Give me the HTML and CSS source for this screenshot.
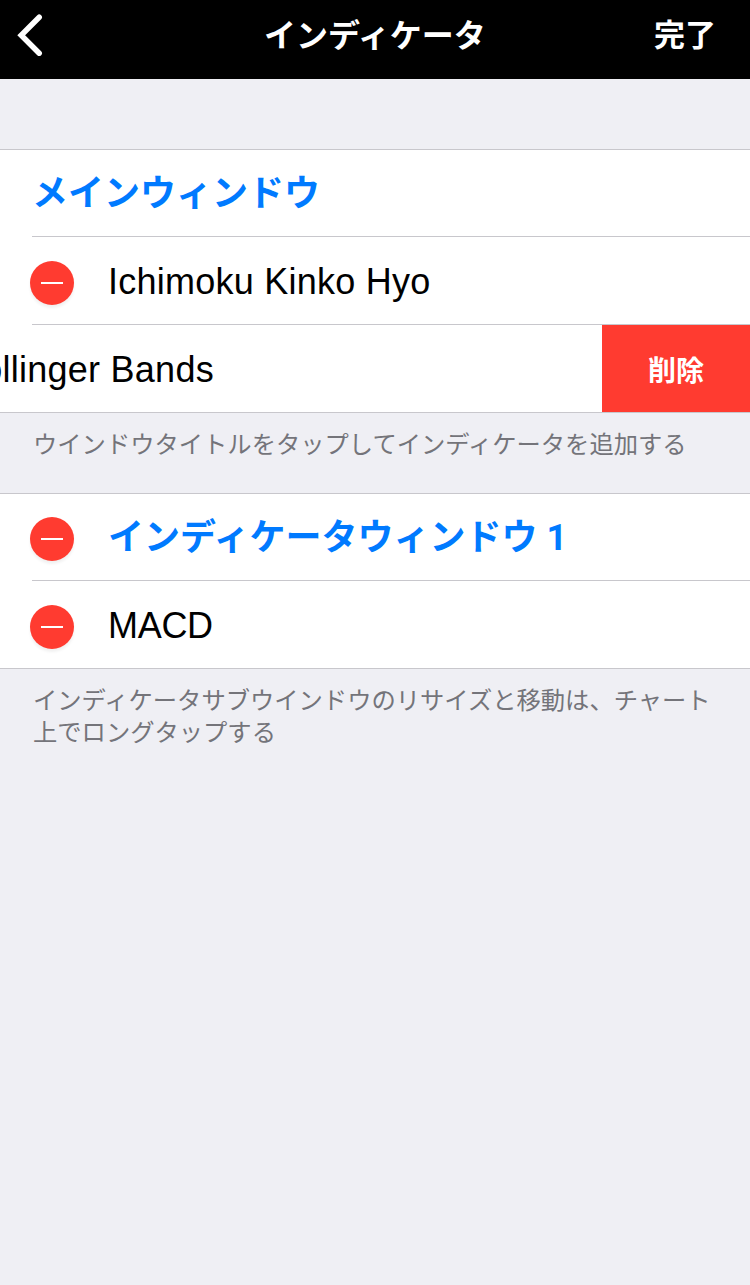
FILE: index.html
```html
<!DOCTYPE html>
<html lang="ja">
<head>
  <meta charset="UTF-8" />
  <meta name="viewport" content="width=device-width, initial-scale=1.0"/>
  <title>インディケータ</title>
  <link rel="stylesheet" href="styles.css">
</head>
<body>

  <!-- Navigation bar -->
  <header class="navbar">
    <button class="back-btn" aria-label="戻る">
      <svg width="28" height="44" viewBox="0 0 28 44">
        <path d="M23.200 4.200 L5.200 22.200 L23.200 40.200" fill="none" stroke="#fff" stroke-width="5.500" stroke-linecap="round" stroke-linejoin="miter"/>
      </svg>
    </button>
    <h1>インディケータ</h1>
    <button class="done-btn">完了</button>
  </header>

  <main>
    <!-- Main window -->
    <section class="group">
      <div class="row"><h2>メインウィンドウ</h2></div>
      <div class="row">
        <button class="remove-btn" aria-label="削除"></button>
        <span class="label">Ichimoku Kinko Hyo</span>
      </div>
      <div class="row swiped">
        <span class="label">Bollinger Bands</span>
        <button class="delete-btn">削除</button>
      </div>
    </section>
    <p class="note note-main">ウインドウタイトルをタップしてインディケータを追加する</p>

    <!-- Indicator window -->
    <section class="group">
      <div class="row">
        <button class="remove-btn" aria-label="削除"></button>
        <h2>インディケータウィンドウ <span class="number">1</span></h2>
      </div>
      <div class="row">
        <button class="remove-btn" aria-label="削除"></button>
        <span class="label macd">MACD</span>
      </div>
    </section>
    <p class="note">インディケータサブウインドウのリサイズと移動は、チャート<br>上でロングタップする</p>
  </main>

</body>
</html>
```
FILE: styles.css
```css
/* Global reset */
* {
  margin: 0;
  padding: 0;
  box-sizing: border-box;
}

body {
  font-family: "Liberation Sans", "Noto Sans CJK JP", sans-serif;
  background: #efeff4;
  color: #000;
  min-height: 100vh;
  overflow-x: hidden;
}

button {
  border: none;
  background: none;
  color: #fff;
  font-family: inherit;
  cursor: pointer;
}

/* Navigation bar */
.navbar {
  display: grid;
  grid-template-columns: 1fr auto 1fr;
  align-items: center;
  height: 79px;
  padding: 0 34px 8px;
  background: #000;
  color: #fff;
}

.navbar h1 {
  font-size: 32px;
  line-height: 46px;
  font-weight: bold;
}

.back-btn {
  justify-self: start;
  height: 44px;
  margin: -1px 0 0 -18px;
}

.done-btn {
  justify-self: end;
  padding-top: 1px;
  font-size: 31px;
  line-height: 46px;
  font-weight: bold;
}

main {
  padding-top: 70px;
}

/* Table groups */
.group {
  background: #fff;
  border-top: 1px solid #c8c7cc;
  border-bottom: 1px solid #c8c7cc;
}

.row {
  display: flex;
  align-items: center;
  height: 88px;
  margin-left: 32px;
}

.row:first-child {
  height: 86px;
}

.row + .row {
  border-top: 1px solid #c8c7cc;
}

.row h2 {
  padding-top: 2px;
  font-size: 36px;
  line-height: 52px;
  font-weight: bold;
  color: #007aff;
}

/* plain "1" without a foot */
.number {
  margin-left: -1px;
  font-family: Roboto, sans-serif;
}

.label {
  padding-top: 2px;
  font-size: 36px;
  line-height: 52px;
  letter-spacing: 0.25px;
  white-space: nowrap;
}

.macd {
  letter-spacing: -0.3px;
}

/* Red circle with a minus */
.remove-btn {
  display: flex;
  align-items: center;
  justify-content: center;
  flex: none;
  width: 44px;
  height: 44px;
  margin: 4px 34px 0 -2px;
  border-radius: 50%;
  background: #ff3b30;
  box-shadow: 0 3px 3px rgba(0, 0, 0, 0.06);
}

.remove-btn::before {
  content: "";
  width: 22px;
  height: 2px;
  background: #fff;
}

/* Row pulled left to reveal the delete button */
.swiped .label {
  margin-left: -74px;
}

.delete-btn {
  align-self: stretch;
  width: 148px;
  margin-left: auto;
  background: #ff3b30;
  font-size: 28px;
  font-weight: bold;
}

.note {
  padding: 14px 33px 0;
  font-family: "Noto Sans CJK JP", sans-serif;
  font-size: 24.300px;
  line-height: 32px;
  color: #74747a;
  white-space: nowrap;
}

.note-main {
  height: 80px;
}
```
